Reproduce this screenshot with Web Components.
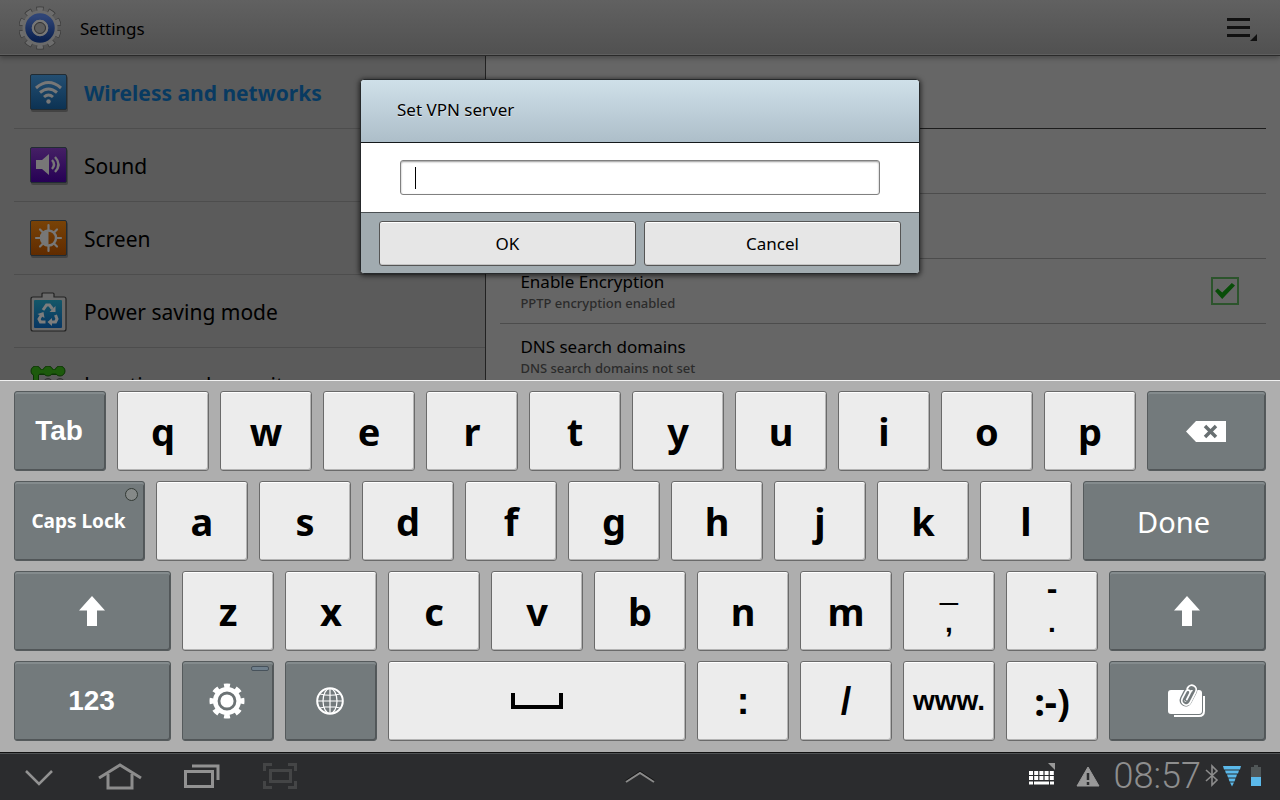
<!DOCTYPE html>
<html lang="en">
<head>
<meta charset="utf-8">
<title>Settings</title>
<style>
	body {
		margin: 0;
		font-family: "Noto Sans", "Open Sans", sans-serif;
		color: #000;
	}
</style>
</head>
<body>
<tablet-screen>
	<action-bar slot="app">Settings</action-bar>
	<settings-panes slot="app">
		<settings-item slot="nav" icon="wifi" selected>Wireless and networks</settings-item>
		<settings-item slot="nav" icon="sound">Sound</settings-item>
		<settings-item slot="nav" icon="screen">Screen</settings-item>
		<settings-item slot="nav" icon="power">Power saving mode</settings-item>
		<settings-item slot="nav" icon="location">Location and security</settings-item>
		<pref-row heading></pref-row>
		<pref-row></pref-row>
		<pref-row></pref-row>
		<pref-row checkable>Enable Encryption<span slot="summary">PPTP encryption enabled</span></pref-row>
		<pref-row>DNS search domains<span slot="summary">DNS search domains not set</span></pref-row>
	</settings-panes>
	<prompt-dialog slot="dialog">Set VPN server</prompt-dialog>
	<soft-keyboard slot="keyboard"></soft-keyboard>
	<system-bar slot="system"></system-bar>
</tablet-screen>

<template id="tablet-screen">
	<style>
		:host {
			display: flex;
			flex-direction: column;
			height: 100vh;
			overflow: hidden;
		}
		.app {
			position: relative;
			flex: 1;
			min-height: 0;
			display: flex;
			flex-direction: column;
			overflow: hidden;
			background: #666;
		}
		.overlay {
			position: absolute;
			inset: 0;
			z-index: 2;
			display: flex;
			justify-content: center;
			align-items: flex-start;
			padding-top: 79px;
		}
	</style>
	<div class="app">
		<slot name="app"></slot>
		<div class="overlay"><slot name="dialog"></slot></div>
	</div>
	<slot name="keyboard"></slot>
	<slot name="system"></slot>
</template>

<template id="action-bar">
	<style>
		:host {
			display: flex;
			align-items: center;
			gap: 19px;
			height: 52px;
			flex: none;
			padding: 2px 22px 0 19px;
			background: linear-gradient(#616161, #515151);
			border-bottom: 1px solid #5f5f5f;
			box-shadow: 0 1px #2a2a2a, 0 3px 5px rgba(0, 0, 0, .3);
			z-index: 1;
		}
		h1 {
			flex: 1;
			margin: 0;
			font-size: 17px;
			font-weight: 400;
		}
		button {
			display: flex;
			padding: 0;
			border: 0;
			background: none;
			color: inherit;
		}
	</style>
	<ui-icon name="gear"></ui-icon>
	<h1><slot></slot></h1>
	<button aria-label="Menu"><ui-icon name="menu"></ui-icon></button>
</template>

<template id="settings-panes">
	<style>
		:host {
			display: flex;
			flex: 1;
			min-height: 0;
			padding-top: 1px;
		}
		nav {
			width: 38%;
			box-sizing: border-box;
			padding-left: 14px;
			background: #5b5b5b;
			border-right: 1px solid #222;
			overflow: hidden;
		}
		main {
			flex: 1;
			min-width: 0;
			padding: 0 14px;
			overflow: hidden;
		}
	</style>
	<nav><slot name="nav"></slot></nav>
	<main><slot></slot></main>
</template>

<template id="settings-item">
	<style>
		:host {
			display: block;
			border-bottom: 1px solid #4d4d4d;
		}
		a {
			display: flex;
			align-items: center;
			gap: 16px;
			height: 71px;
			padding: 1px 16px 0;
			color: inherit;
			font-size: 21px;
			text-decoration: none;
			white-space: nowrap;
		}
		:host([selected]) a {
			color: #083a61;
			font-weight: 700;
		}
	</style>
	<a href="#"><ui-icon></ui-icon><slot></slot></a>
</template>

<template id="pref-row">
	<style>
		:host {
			display: flex;
			align-items: center;
			height: 64px;
			padding: 0 27px 0 20px;
			border-bottom: 1px solid #4c4c4c;
		}
		:host([heading]) {
			height: 72px;
			border-color: #1c1c1c;
		}
		label {
			flex: 1;
			padding-top: 2px;
			font-size: 17px;
			line-height: 22px;
		}
		small {
			display: block;
			color: #2b2b2b;
			font-size: 13px;
			font-weight: 500;
			line-height: 20px;
		}
		input {
			appearance: none;
			display: grid;
			place-items: center;
			width: 28px;
			height: 28px;
			margin: 0;
			border: 2px solid #2c542c;
		}
		input:checked::after {
			content: "";
			width: 20px;
			height: 16px;
			background: #084d08;
			clip-path: polygon(0 50%, 14% 34%, 36% 60%, 84% 0, 100% 16%, 36% 100%);
		}
	</style>
	<label for="check"><slot></slot><small><slot name="summary"></slot></small></label>
</template>

<template id="prompt-dialog">
	<style>
		:host {
			display: block;
			width: 560px;
			max-width: 100%;
			box-sizing: border-box;
			border: 1px solid #26292b;
			border-radius: 4px;
			overflow: hidden;
			background: #fff;
			box-shadow: 0 1px 5px 1px rgba(0, 0, 0, .6);
			font-size: 17px;
		}
		h2 {
			margin: 0;
			padding-left: 36px;
			font-size: inherit;
			font-weight: 400;
			line-height: 60px;
			height: 62px;
			background: linear-gradient(#cfe0e9, #adbec9);
			border-bottom: 1px solid #14181a;
			text-shadow: 0 1px rgba(255, 255, 255, .6);
		}
		.body {
			display: flex;
			padding: 17px 39px;
		}
		input {
			flex: 1;
			min-width: 0;
			height: 35px;
			box-sizing: border-box;
			padding: 0 14px;
			border: 1px solid #808080;
			border-radius: 3px;
			outline: 0;
			font: inherit;
			/* steady text cursor, does not blink */
			caret-color: transparent;
			background: linear-gradient(#000, #000) 14px 6px / 1px 22px no-repeat #fff;
			box-shadow: inset 0 1px 2px #999;
		}
		.actions {
			display: flex;
			gap: 8px;
			padding: 8px 18px 7px;
			background: #a1abb0;
			border-top: 1px solid #4b5053;
		}
		button {
			flex: 1;
			height: 45px;
			border: 1px solid #555;
			border-radius: 3px;
			background: #e6e6e6;
			box-shadow: inset 0 1px #fff, inset 0 -1px #c4c4c4;
			color: inherit;
			font: inherit;
		}
	</style>
	<h2><label for="server"><slot></slot></label></h2>
	<div class="body"><input id="server" type="text"></div>
	<div class="actions">
		<button>OK</button>
		<button>Cancel</button>
	</div>
</template>

<template id="soft-keyboard">
	<style>
		:host {
			display: flex;
			flex-direction: column;
			gap: 10px;
			flex: none;
			padding: 10px 14px 11px;
			background: #aeaeae;
			border-top: 1px solid #f0f0f0;
		}
		.row {
			display: flex;
			gap: 11px;
		}
	</style>
</template>

<template id="soft-key">
	<style>
		:host {
			display: flex;
			flex: var(--w, 92) 1 0;
			min-width: 0;
		}
		button {
			position: relative;
			display: flex;
			flex-direction: column;
			align-items: center;
			justify-content: center;
			flex: 1;
			min-width: 0;
			height: 80px;
			padding: 0;
			border: 1px solid #6a6a6a;
			border-radius: 3px;
			background: #ececec;
			box-shadow: inset 0 1px #fff, inset -1px -1px #b4b4b4;
			color: #000;
			font: 700 38px "Noto Sans", "Open Sans", sans-serif;
			white-space: nowrap;
		}
		:host([dark]) button {
			padding-right: 2px;
			border-color: #555a5c;
			background: #737a7c;
			box-shadow: inset 0 2px #848b8d, inset -1px -1px #515658;
			color: #fff;
		}
		:host([face="label"]) button {
			font: 700 28px "Liberation Sans", sans-serif;
		}
		:host([face="small"]) button {
			font-size: 19px;
		}
		:host([face="action"]) button {
			font-size: 29px;
			font-weight: 400;
		}
		:host([face="symbol"]) button {
			font: 700 38px "Liberation Sans", sans-serif;
		}
		:host([face^="stack"]) button {
			padding-bottom: 14px;
			font: 700 28px/32px "Liberation Sans", sans-serif;
		}
		:host([face^="stack"]) ::slotted(:first-child) {
			font-size: 32px;
			line-height: 37px;
		}
		:host([face="stack-thin"]) ::slotted(:first-child) {
			font-weight: 400;
		}
		i {
			position: absolute;
			top: 6px;
			right: 6px;
			width: 11px;
			height: 11px;
			border: 1px solid #333a35;
			border-radius: 50%;
			background: #858988;
		}
		i.bar {
			top: 4px;
			right: 4px;
			width: 16px;
			height: 3px;
			border-color: #47525b;
			border-radius: 2px;
			background: #6f7f8c;
		}
	</style>
	<button><slot></slot></button>
</template>

<template id="system-bar">
	<style>
		:host {
			display: grid;
			grid-template-columns: 1fr auto 1fr;
			align-items: center;
			height: 46px;
			flex: none;
			padding: 0 18px;
			background: #2b2c2e;
			border-top: 1px solid #4f5254;
			box-shadow: 0 -1px #111;
			margin-top: 1px;
			color: #8e8e8e;
		}
		.group {
			display: flex;
			align-items: center;
			gap: 42px;
		}
		.status {
			justify-content: flex-end;
			gap: 4px;
		}
		.status ui-icon[name="warning"] {
			margin: 0 10px 0 16px;
		}
		button {
			display: flex;
			padding: 0;
			border: 0;
			background: none;
			color: inherit;
		}
		time {
			font: 300 36px/42px Roboto, sans-serif;
			margin-bottom: 2px;
		}
	</style>
	<div class="group">
		<button aria-label="Hide keyboard"><ui-icon name="down"></ui-icon></button>
		<button aria-label="Home"><ui-icon name="home"></ui-icon></button>
		<button aria-label="Recent apps"><ui-icon name="recent"></ui-icon></button>
		<button aria-label="Screen capture"><ui-icon name="capture"></ui-icon></button>
	</div>
	<button aria-label="Mini apps"><ui-icon name="up"></ui-icon></button>
	<div class="group status">
		<ui-icon name="keyboard"></ui-icon>
		<ui-icon name="warning"></ui-icon>
		<time>08:57</time>
		<ui-icon name="bluetooth"></ui-icon>
		<ui-icon name="signal"></ui-icon>
		<ui-icon name="battery"></ui-icon>
	</div>
</template>

<script>
const tile = (id, top, bottom) => `
	<linearGradient id="${id}" x2="0" y2="1"><stop stop-color="${top}"/><stop offset="1" stop-color="${bottom}"/></linearGradient>
	<rect x="1" y="2" width="37" height="36" rx="2" fill="#333" opacity=".6"/>
	<rect x=".5" y=".5" width="36" height="35" rx="1.5" fill="url(#${id})" stroke="#222c33"/>`

// [width, height, markup]
const icons = {
	gear: [42, 44, `
		<linearGradient id="g" x2="0" y2="1"><stop stop-color="#2f4577"/><stop offset="1" stop-color="#0c2250"/></linearGradient>
		<g transform="rotate(-90 21 22)" fill="none">
			<circle cx="21" cy="22" r="18.500" stroke="#3a3a3a" stroke-width="6" pathLength="20" stroke-dasharray="1.200 .8" stroke-dashoffset=".6"/>
			<circle cx="21" cy="22" r="18" stroke="#6d6d6d" stroke-width="5.500" pathLength="20" stroke-dasharray="1 1" stroke-dashoffset=".5"/>
		</g>
		<circle cx="21" cy="22" r="17.500" fill="#6b6b6b"/>
		<circle cx="21" cy="22" r="11.500" fill="none" stroke="url(#g)" stroke-width="6.500"/>
		<circle cx="21" cy="22" r="7" fill="#555" stroke="#777" stroke-width="2.500"/>
		<circle cx="21" cy="22" r="5.500" fill="#5d5d5d" stroke="#333"/>`],
	menu: [31, 26, `<path d="M0 3h23v3H0zM0 11h23v3H0zM0 19h23v3H0zM30 19v7h-7z" fill="#111"/>`],
	wifi: [38, 38, tile('w', '#244f72', '#0c3253') + `
		<g fill="none" stroke="#777" stroke-width="3">
			<path d="M6 14q12.500-11 25 0M10 18.500q8.500-7 17 0M14 23q4.500-4 9 0"/>
		</g><circle cx="18.500" cy="27.500" r="2.200" fill="#777"/>`],
	sound: [38, 38, tile('s', '#452065', '#260055') + `
		<path d="M6 13h6l7-6v21l-7-6H6z" fill="#777"/>
		<path d="M22 13q4 4.500 0 9M25 10q7 7.500 0 15" fill="none" stroke="#777" stroke-width="2.400"/>`],
	screen: [38, 38, tile('b', '#794307', '#602b00') + `
		<g stroke="#777" stroke-width="2.200" stroke-linecap="round">
			<path d="M18.500 5v5M18.500 26v5M6 18h5M26 18h5M10 9.500l3 3M24 23.500l3 3M10 26.500l3-3M24 12.500l3-3"/>
		</g>
		<circle cx="18.500" cy="18" r="7.500" fill="none" stroke="#777" stroke-width="2.500"/>
		<path d="M18.500 11a7 7 0 0 0 0 14z" fill="#777"/>`],
	power: [38, 42, `
		<path d="M3 6h9V3q0-1 1-1h10q1 0 1 1v3h10q2 0 2 2v30q0 2-2 2H3q-2 0-2-2V8q0-2 2-2z" fill="#6a6a6a" stroke="#222" stroke-width="1.200"/>
		<linearGradient id="p" x2="0" y2="1"><stop stop-color="#145768"/><stop offset="1" stop-color="#073663"/></linearGradient>
		<rect x="4" y="9" width="28" height="28" rx="1" fill="url(#p)"/>
		<g fill="none" stroke="#7d7d7d" stroke-width="3">
			<path d="M13 19l3.500-5h3l3 4M25.500 24l1.500 4-1.500 3h-4M15.500 31h-5L9 28l2.500-4"/>
		</g>
		<path d="M25.500 15v6h-6zM22 27v8l-4.500-4zM7.500 23l6-2 1 6z" fill="#7d7d7d"/>`],
	location: [38, 38, `
		<path d="M30 6H6v28" fill="none" stroke="#0c3505" stroke-width="6"/>
		<g fill="#1d5a0c" stroke="#0c3505"><circle cx="6" cy="5" r="5"/><circle cx="18" cy="5" r="5"/><circle cx="30" cy="5" r="5"/></g>
		<path d="M30 5.500H6V34" fill="none" stroke="#1d5a0c" stroke-width="4"/>
		<g fill="#4c4c4c" stroke="#333"><circle cx="18" cy="17" r="4.500"/><circle cx="30" cy="17" r="4.500"/></g>`],
	backspace: [40, 21, `<path d="M0 10.500L10 0h30v21H10z" fill="#fff"/>
		<path d="M19 5l11 11M30 5L19 16" stroke="#686f71" stroke-width="3.500"/>`],
	shift: [26, 30, `<path d="M13 0l13 14.500h-8V30H8V14.500H0z" fill="#fff"/>`],
	cog: [36, 36, `
		<circle cx="18" cy="18" r="15" fill="none" stroke="#fff" stroke-width="5" pathLength="16" stroke-dasharray="1 1" stroke-dashoffset=".5"/>
		<circle cx="18" cy="18" r="14" fill="#fff"/>
		<circle cx="18" cy="18" r="8" fill="#fff" stroke="#6b7274" stroke-width="2.800"/>`],
	globe: [28, 28, `<g fill="none" stroke="#fff" stroke-width="1.200">
		<circle cx="14" cy="14" r="12.800" stroke-width="2"/>
		<ellipse cx="14" cy="14" rx="7" ry="12.500"/><path d="M14 1v26M1 14h26M4 7q10 2.500 20 0M4 21q10-2.500 20 0"/></g>`],
	space: [52, 16, `<path d="M2 0v14h48V0" fill="none" stroke="#000" stroke-width="4"/>`],
	attach: [38, 38, `
		<path d="M6 34h25q5 0 5-5V14" fill="none" stroke="#fff" stroke-width="2"/>
		<rect y="8" width="34" height="24" rx="3" fill="#fff"/>
		<g fill="none" stroke-linecap="round" transform="rotate(27 21 12)">
			<path d="M17 8v-1a4 4 0 0 1 8 0v12a4 4 0 0 1-8 0v-7a2 2 0 0 1 4 0v6" stroke="#737a7c" stroke-width="4.500"/>
			<path d="M17 8v-1a4.500 4.500 0 0 1 9 0v12a4.500 4.500 0 0 1-9 0v-8a2 2 0 0 1 4.500 0v7" stroke="#fff" stroke-width="1.800"/>
		</g>`],
	down: [38, 26, `<path d="M8 7l13 13L34 7" fill="none" stroke="#929292" stroke-width="2.500"/>`],
	home: [44, 30, `<g fill="none" stroke="#8c8c8c" stroke-width="3">
		<path d="M1 16L22 3l21 13"/><path d="M10 12v14h24V12"/></g>`],
	recent: [36, 28, `<g fill="none" stroke="#929292"><path d="M8 3h26v14" stroke-width="3"/><rect x="1.500" y="8.500" width="27" height="15" stroke-width="3"/></g>`],
	capture: [36, 30, `<g fill="none" stroke="#444546" stroke-width="3">
		<path d="M10 2.500H2.500V9M26 2.500h7.500V9M2.500 19v6.500H10M33.500 19v6.500H26"/><rect x="8.500" y="8.500" width="20" height="11"/></g>`],
	up: [30, 16, `<path d="M1 12l14-9 14 9" fill="none" stroke="#111" stroke-width="2"/><path d="M1 13l14-9 14 9" fill="none" stroke="#8a8a8a" stroke-width="2"/>`],
	keyboard: [28, 28, `<g stroke="#fff" stroke-width="4"><path d="M1 10h25M1 15h25" stroke-dasharray="4 1.200"/><path d="M1 20h4M6 20h15M22 20h4" stroke-width="3"/></g><path d="M20 0h7v7z" fill="#999"/>`],
	warning: [24, 24, `<path d="M12 2l11 19H1z" fill="#999" stroke="#999" stroke-linejoin="round"/><path d="M12 8v7M12 17v3" stroke="#2b2c2e" stroke-width="2.500"/>`],
	bluetooth: [14, 26, `<path d="M1 6l11 10-5 5V2l5 5L1 17" fill="none" stroke="#8c8c8c" stroke-width="1.600"/>`],
	signal: [18, 24, `<path d="M0 1h18l-1 3.500H1zM2 5.500h14l-1 3H3zM4 9.500h10l-1 3H5zM5.500 13.500h7l-1 3h-5zM7 17.500h4l-2 4z" fill="#5bb9ea"/>`],
	battery: [17, 26, `<path d="M6 3h3V1h4v2h3v10H6z" fill="#505657"/><path d="M6 13h10v9H6z" fill="#5bb9ea"/>`],
}

// face "label" is the plain sans used on mode keys
const rows = [
	[{t: 'Tab', dark: 1, face: 'label'}, ...'qwertyuiop', {icon: 'backspace', name: 'Backspace', dark: 1, w: 119}],
	[{t: 'Caps Lock', dark: 1, face: 'small', w: 131, led: 'dot'}, ...'asdfghjkl', {t: 'Done', dark: 1, face: 'action', w: 183}],
	[
		{icon: 'shift', name: 'Shift', dark: 1, w: 157}, ...'zxcvbnm',
		{stack: ['_', ','], face: 'stack-thin'}, {stack: ['-', '.'], face: 'stack'},
		{icon: 'shift', name: 'Shift', dark: 1, w: 157},
	],
	[
		{t: '123', dark: 1, face: 'label', w: 157},
		{icon: 'cog', name: 'Keyboard settings', dark: 1, led: 'bar'},
		{icon: 'globe', name: 'Language', dark: 1},
		{icon: 'space', name: 'Space', w: 298},
		{t: ':', face: 'symbol'}, {t: '/', face: 'symbol'}, {t: 'www.', face: 'label'}, ':-)',
		{icon: 'attach', name: 'Clipboard', dark: 1, w: 157},
	],
]

class BaseElement extends HTMLElement {
	constructor() {
		super()
		this.root = this.attachShadow({mode: 'open'})
		const t = document.getElementById(this.localName)
		if(t) this.root.appendChild(t.content.cloneNode(true))
	}
}

customElements.define('ui-icon', class extends BaseElement {
	static get observedAttributes() {return ['name']}

	attributeChangedCallback() {
		const [w, h, body] = icons[this.getAttribute('name')]
		this.root.innerHTML = `
			<style>:host {display: inline-flex; flex: none} svg {display: block}</style>
			<svg width="${w}" height="${h}" viewBox="0 0 ${w} ${h}" aria-hidden="true">${body}</svg>`
	}
})

customElements.define('settings-item', class extends BaseElement {
	connectedCallback() {
		this.root.querySelector('ui-icon').setAttribute('name', this.getAttribute('icon'))
	}
})

customElements.define('pref-row', class extends BaseElement {
	connectedCallback() {
		if(!this.hasAttribute('checkable')) return
		const check = document.createElement('input')
		check.type = 'checkbox'
		check.id = 'check'
		check.checked = true
		this.root.appendChild(check)
	}
})

customElements.define('soft-key', class extends BaseElement {
	connectedCallback() {
		const button = this.root.querySelector('button')
		const name = this.getAttribute('name')
		const led = this.getAttribute('led')
		if(name) button.setAttribute('aria-label', name)
		if(led) {
			const i = document.createElement('i')
			i.className = led
			button.appendChild(i)
		}
	}
})

customElements.define('soft-keyboard', class extends BaseElement {
	connectedCallback() {
		for(const keys of rows) {
			const row = document.createElement('div')
			row.className = 'row'
			for(let k of keys) {
				if(typeof k === 'string') k = {t: k}
				const key = document.createElement('soft-key')
				for(const attr of ['face', 'name', 'led']) {
					if(k[attr]) key.setAttribute(attr, k[attr])
				}
				if(k.dark) key.setAttribute('dark', '')
				if(k.w) key.style.setProperty('--w', k.w)
				if(k.icon) key.innerHTML = `<ui-icon name="${k.icon}"></ui-icon>`
				else if(k.stack) key.innerHTML = k.stack.map(c => `<span>${c}</span>`).join('')
				else key.textContent = k.t
				row.appendChild(key)
			}
			this.root.appendChild(row)
		}
	}
})

for(const tag of ['action-bar', 'settings-panes', 'prompt-dialog', 'system-bar', 'tablet-screen']) {
	customElements.define(tag, class extends BaseElement {})
}
</script>
</body>
</html>
